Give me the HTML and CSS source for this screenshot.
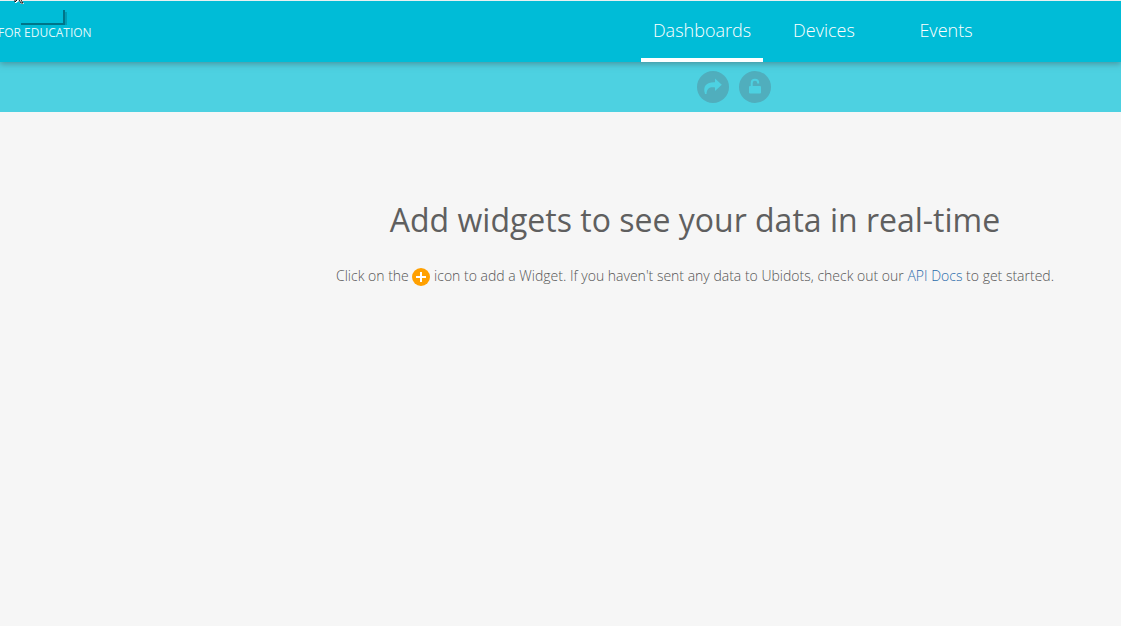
FILE: index.html
```html
<!DOCTYPE html>
<html lang="en">
<head>
<meta charset="utf-8">
<title>Dashboards</title>
<link rel="stylesheet" href="styles.css">
</head>
<body>
<header class="topbar">
  <div class="brand">
    <svg class="brand-mark" width="68" height="24" viewBox="0 0 68 24" aria-hidden="true">
      <path d="M22 24H66V11" fill="none" stroke="#006d80" stroke-opacity=".4" stroke-width="2"/>
      <path d="M21 23H64V9" fill="none" stroke="#007488" stroke-width="2"/>
    </svg>
    <span class="brand-label">FOR EDUCATION</span>
  </div>
  <nav class="tabs">
    <a class="tab tab-active" href="#dashboards">Dashboards</a>
    <a class="tab" href="#devices">Devices</a>
    <a class="tab" href="#events">Events</a>
  </nav>
  <svg class="pointer" width="12" height="4" viewBox="0 0 12 4" aria-hidden="true">
    <path d="M1 0H8L10 4H7L5 1L2 3H1Z" fill="#fff"/>
    <path d="M1 0V2L3 0M5 0L7 3H9L7 0" fill="none" stroke="#111"/>
  </svg>
</header>
<div class="toolbar">
  <button class="tool" type="button" aria-label="Share">
    <svg width="32" height="32" viewBox="0 0 32 32"><path d="M18 7.500L24.800 13.800L18 20V16.500C12.500 15.800 10 17.500 9.500 23H8C5.500 15 9.500 11 18 11.300Z" fill="#4dd1e1"/></svg>
  </button>
  <button class="tool" type="button" aria-label="Unlock">
    <svg width="32" height="32" viewBox="0 0 32 32"><rect x="10" y="15" width="12" height="7.500" rx="1" fill="#4dd1e1"/><path d="M12.700 15.500V12C12.700 7.800 19.200 7.800 19.200 12V12.500" fill="none" stroke="#4dd1e1" stroke-width="2"/></svg>
  </button>
</div>
<main class="empty">
  <h1 class="title">Add widgets to see your data in real-time</h1>
  <p class="hint">Click on the <svg class="plus" width="18" height="18" viewBox="0 0 18 18" role="img" aria-label="plus"><circle cx="9" cy="9" r="9" fill="#ffa000"/><path d="M9 4V14M4 9H14" stroke="#fff" stroke-width="2"/></svg> icon to add a Widget. If you haven't sent any data to Ubidots, check out our <a class="link" href="#docs">API Docs</a> to get started.</p>
</main>
</body>
</html>
```
FILE: styles.css
```css
* { box-sizing: border-box; }
body {
  margin: 0;
  background: #f6f6f6;
  color: #555;
  font-family: "Open Sans", "Noto Sans", sans-serif;
}
.topbar {
  position: relative;
  z-index: 1;
  display: flex;
  justify-content: space-between;
  height: 62px;
  padding-right: 114px;
  border-top: 1px solid #e8f0f1;
  background: #00bcd7;
  box-shadow: 0 2px 6px rgba(70, 90, 95, 0.5);
}
.brand {
  display: flex;
  flex-direction: column;
  color: #dff7fa;
}
.brand-mark { display: block; }
.brand-label {
  margin-left: -2px;
  font-size: 12px;
  line-height: 16px;
}
.tabs { display: flex; }
.tab {
  width: 122px;
  border-bottom: 4px solid transparent;
  color: #fff;
  font-size: 18px;
  font-weight: 300;
  line-height: 58px;
  text-align: center;
  text-decoration: none;
}
.tab-active { border-bottom-color: #fff; }
.pointer {
  position: absolute;
  top: -1px;
  left: 14px;
}
.toolbar {
  display: flex;
  justify-content: center;
  gap: 10px;
  padding: 9px 0 9px 347px;
  background: #4dd1e1;
}
.tool {
  width: 32px;
  height: 32px;
  padding: 0;
  border: 0;
  border-radius: 50%;
  background: #50aebd;
}
.tool svg { display: block; }
.empty {
  padding: 85px 0 0 269px;
  text-align: center;
}
.title {
  margin: 0;
  color: #5f5f5f;
  font-size: 32px;
  font-weight: 400;
  line-height: 46px;
}
.hint {
  margin: 23px 0 0;
  font-size: 14px;
  font-weight: 300;
  line-height: 20px;
}
.plus { vertical-align: -5px; }
.link {
  color: #2a6cab;
  text-decoration: none;
}
```
